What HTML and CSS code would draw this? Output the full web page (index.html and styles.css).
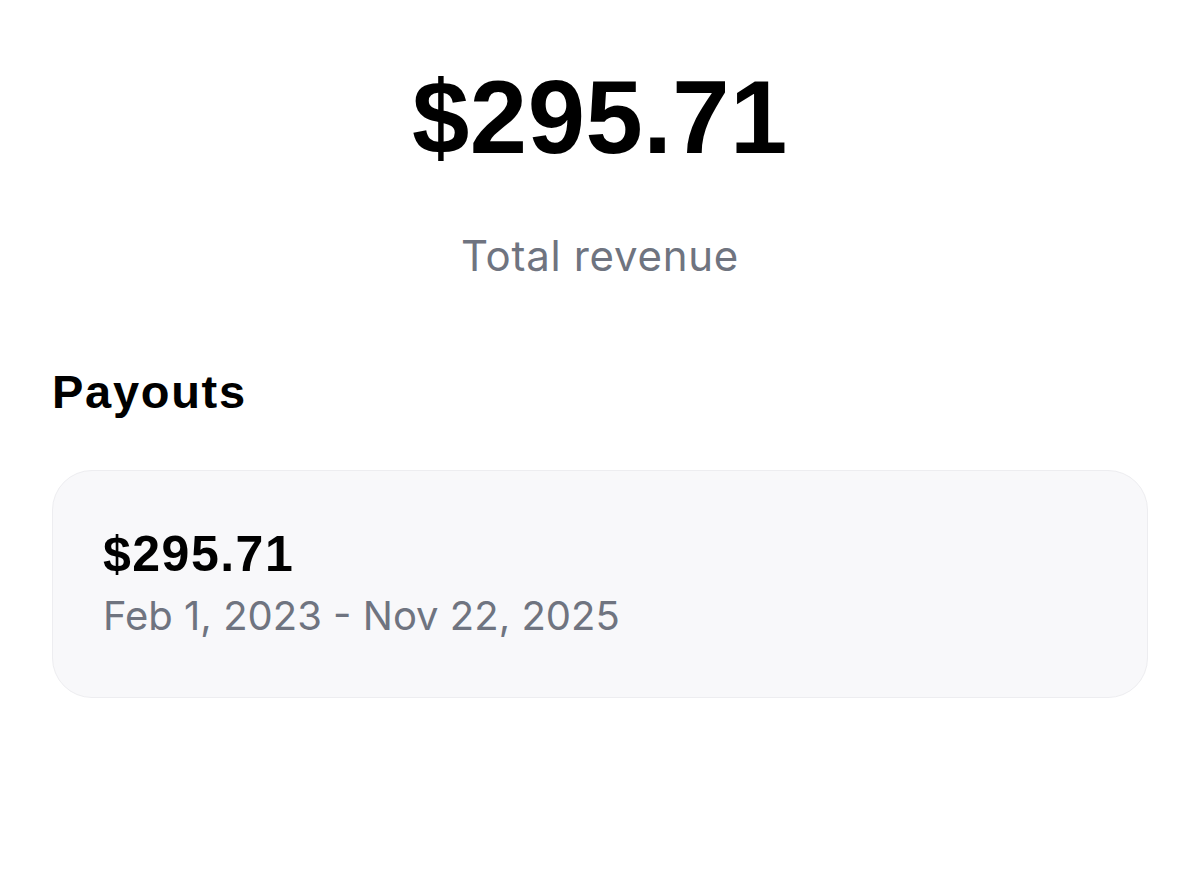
FILE: index.html
```html
<!DOCTYPE html>
<html lang="en">
<head>
<meta charset="utf-8">
<title>Revenue</title>
<link rel="stylesheet" href="styles.css">
</head>
<body>
<main class="page">
  <section class="summary">
    <div class="total">$295.71</div>
    <div class="total-label">Total revenue</div>
  </section>
  <h2 class="section-title">Payouts</h2>
  <div class="payout-card">
    <div class="payout-amount">$295.71</div>
    <div class="payout-range">Feb 1, 2023 - Nov 22, 2025</div>
  </div>
</main>
</body>
</html>
```
FILE: styles.css
```css
html, body {
  margin: 0;
  padding: 0;
  background: #ffffff;
}
body {
  font-family: "Liberation Sans", Arial, sans-serif;
  color: #000;
}
.page {
  padding: 66px 52px 0;
}
.summary {
  display: flex;
  flex-direction: column;
  align-items: center;
}
.total {
  font-size: 103px;
  line-height: 1;
  font-weight: 700;
  letter-spacing: 0.5px;
}
.total-label {
  margin-top: 66px;
  font-family: "Inter", "Liberation Sans", sans-serif;
  font-size: 42px;
  line-height: 1;
  letter-spacing: 0.7px;
  color: #6f7480;
}
.section-title {
  margin: 91px 0 0;
  font-size: 47px;
  line-height: 1;
  font-weight: 700;
  letter-spacing: 1.7px;
}
.payout-card {
  margin-top: 55px;
  background: #f8f8fa;
  border: 1px solid #ededf0;
  border-radius: 40px;
  padding: 58px 50px 61px;
}
.payout-amount {
  font-size: 50px;
  line-height: 1;
  font-weight: 700;
  letter-spacing: 1.5px;
}
.payout-range {
  margin-top: 17px;
  font-family: "Inter", "Liberation Sans", sans-serif;
  font-size: 40px;
  line-height: 1;
  color: #6f7480;
}
```
